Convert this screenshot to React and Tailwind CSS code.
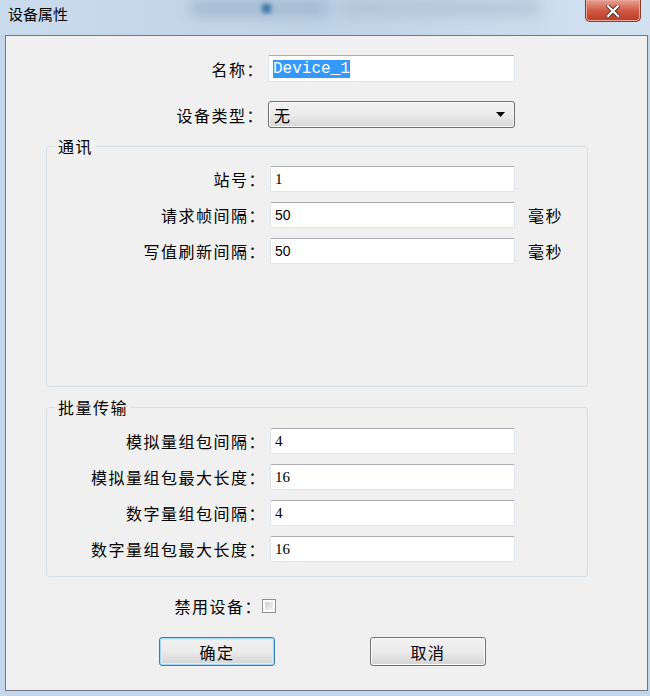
const cjk = "font-['Noto_Sans_CJK_SC',sans-serif]";

function TextBox({ children, wide }) {
  return (
    <div
      className={`${wide ? "w-[247px] h-[27px]" : "w-[245px] h-[26px]"} bg-white border border-[#dfe3ea] border-t-[#abadb3] rounded-[2px] flex items-center pl-[4px] text-black`}
    >
      {children}
    </div>
  );
}

function Field({ label, labelWidth, children, unit }) {
  return (
    <div className="flex items-center">
      <div
        className={`${labelWidth} text-right pr-[4px] text-[16px] tracking-[1.5px] text-black ${cjk}`}
      >
        {label}
      </div>
      {children}
      {unit && (
        <div className={`ml-[13px] text-[16px] tracking-[1.5px] text-black ${cjk}`}>
          {unit}
        </div>
      )}
    </div>
  );
}

function Num({ children, sans }) {
  return (
    <span
      className={`${
        sans
          ? "font-['Liberation_Sans',sans-serif] text-[14px]"
          : "font-['Liberation_Serif',serif] text-[15px]"
      }`}
    >
      {children}
    </span>
  );
}

function Group({ title, height, children }) {
  return (
    <div
      className={`relative ml-[40px] w-[542px] ${height} border border-[#d8e0e6] rounded-[3px]`}
    >
      <div
        className={`absolute left-[8px] -top-[11px] bg-[#f0f0f0] px-[3px] text-[16px] tracking-[1.5px] leading-[20px] text-black ${cjk}`}
      >
        {title}
      </div>
      {children}
    </div>
  );
}

function Button({ children, focused }) {
  return (
    <div
      className={`w-[116px] h-[29px] rounded-[3px] border flex items-center justify-center text-[16px] tracking-[1.5px] text-black bg-gradient-to-b from-[#f2f2f2] via-[#ebebeb] to-[#d3d3d3] ${cjk} ${
        focused
          ? "border-[#3c7fb1] shadow-[inset_0_0_0_1px_#a6d8f5,inset_0_0_0_2px_#d6eefb]"
          : "border-[#707070] shadow-[inset_0_0_0_1px_#fcfcfc]"
      }`}
    >
      {children}
    </div>
  );
}

export default function App() {
  return (
    <div className="w-[650px] h-[696px] bg-[#c4d7ea] flex flex-col overflow-hidden">
      {/* title bar */}
      <div className="relative h-[35px] bg-gradient-to-r from-[#c9dbec] via-[#bfd3e7] to-[#d3e2f0] flex justify-between overflow-hidden">
        <div className="absolute left-[190px] top-[0px] w-[140px] h-[16px] bg-[#8ea6c0] blur-[7px] opacity-60" />
        <div className="absolute left-[340px] top-[0px] w-[200px] h-[16px] bg-[#9fb3c8] blur-[7px] opacity-50" />
        <div className="absolute left-[262px] top-[4px] w-[9px] h-[9px] bg-[#3f78a8] blur-[2px]" />
        <div
          className={`relative pl-[8px] pt-[4px] text-[15px] leading-[20px] text-black ${cjk}`}
        >
          设备属性
        </div>
        <div className="relative mr-[9px] w-[56px] h-[22px] rounded-b-[5px] border border-t-0 border-[#8a3a2e] bg-gradient-to-b from-[#e6a294] via-[#cf5a45] to-[#b93a26] flex items-center justify-center shadow-[inset_0_0_0_1px_#e9a99c]">
          <svg width="14" height="12" viewBox="0 0 14 12">
            <path
              d="M2 1 L12 11 M12 1 L2 11"
              stroke="#4a1a12"
              strokeWidth="4"
              strokeLinecap="square"
            />
            <path
              d="M2 1 L12 11 M12 1 L2 11"
              stroke="#ffffff"
              strokeWidth="2.4"
              strokeLinecap="square"
            />
          </svg>
        </div>
      </div>

      {/* client area */}
      <div className="ml-[5px] mr-[2px] h-[656px] bg-[#f0f0f0] border border-[#6b7a8a] flex flex-col">
        <div className="pt-[19px]">
          <Field label="名称：" labelWidth="w-[262px]">
            <TextBox wide>
              <span className="bg-[#3399ff] text-white font-['Liberation_Mono',monospace] text-[16px] leading-[18px]">
                Device_1
              </span>
            </TextBox>
          </Field>
        </div>
        <div className="mt-[19px]">
          <Field label="设备类型：" labelWidth="w-[262px]">
            <div className="w-[247px] h-[27px] rounded-[3px] border border-[#707070] bg-gradient-to-b from-[#f2f2f2] via-[#ebebeb] to-[#d6d6d6] flex items-center justify-between pl-[5px] pr-[9px] shadow-[inset_0_0_0_1px_#fafafa]">
              <span className={`text-[16px] text-black ${cjk}`}>无</span>
              <svg width="9" height="5" viewBox="0 0 9 5">
                <path d="M0 0 H9 L4.5 5 Z" fill="#000" />
              </svg>
            </div>
          </Field>
        </div>

        <div className="mt-[18px]">
          <Group title="通讯" height="h-[241px]">
            <div className="pt-[19px] flex flex-col gap-[10px]">
              <Field label="站号：" labelWidth="w-[223px]">
                <TextBox>
                  <Num>1</Num>
                </TextBox>
              </Field>
              <Field label="请求帧间隔：" labelWidth="w-[223px]" unit="毫秒">
                <TextBox>
                  <Num sans>50</Num>
                </TextBox>
              </Field>
              <Field label="写值刷新间隔：" labelWidth="w-[223px]" unit="毫秒">
                <TextBox>
                  <Num sans>50</Num>
                </TextBox>
              </Field>
            </div>
          </Group>
        </div>

        <div className="mt-[20px]">
          <Group title="批量传输" height="h-[170px]">
            <div className="pt-[20px] flex flex-col gap-[10px]">
              <Field label="模拟量组包间隔：" labelWidth="w-[223px]">
                <TextBox>
                  <Num>4</Num>
                </TextBox>
              </Field>
              <Field label="模拟量组包最大长度：" labelWidth="w-[223px]">
                <TextBox>
                  <Num>16</Num>
                </TextBox>
              </Field>
              <Field label="数字量组包间隔：" labelWidth="w-[223px]">
                <TextBox>
                  <Num>4</Num>
                </TextBox>
              </Field>
              <Field label="数字量组包最大长度：" labelWidth="w-[223px]">
                <TextBox>
                  <Num>16</Num>
                </TextBox>
              </Field>
            </div>
          </Group>
        </div>

        <div className="mt-[17px] flex items-center">
          <div
            className={`w-[256px] text-right text-[16px] tracking-[1.5px] text-black ${cjk}`}
          >
            禁用设备：
          </div>
          <div className="w-[14px] h-[14px] border border-[#8e8f8f] bg-white p-[2px]">
            <div className="w-full h-full bg-gradient-to-br from-[#cbcfd5] to-[#f6f6f6]" />
          </div>
        </div>

        <div className="mt-[19px] flex">
          <div className="ml-[153px]">
            <Button focused>确定</Button>
          </div>
          <div className="ml-[95px]">
            <Button>取消</Button>
          </div>
        </div>
      </div>
    </div>
  );
}
